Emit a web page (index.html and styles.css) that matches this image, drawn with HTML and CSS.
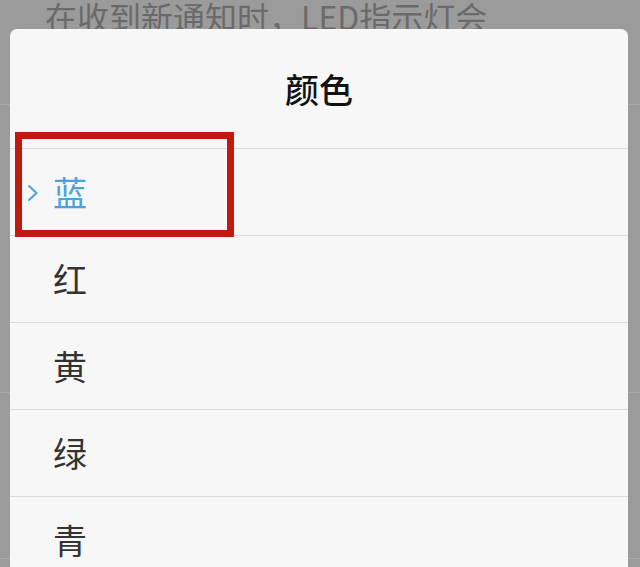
FILE: index.html
```html
<!DOCTYPE html>
<html lang="zh-CN">
<head>
<meta charset="utf-8">
<link rel="stylesheet" href="styles.css">
</head>
<body>
<div class="page">
  <div class="bg-desc">在收到新通知时，LED指示灯会</div>
  <div class="bg-row bg-row1"></div>
  <div class="bg-row bg-row2"></div>
  <div class="bg-row bg-row3"></div>
</div>

<div class="dialog">
  <div class="dialog-title">颜色</div>
  <ul class="options">
    <li class="option selected">
      <svg class="chev" width="12" height="18" viewBox="0 0 12 18"><polyline points="2,2 9.5,9 2,16" fill="none" stroke="#4aa3df" stroke-width="2" stroke-linecap="round" stroke-linejoin="round"/></svg>
      <span>蓝</span>
    </li>
    <li class="option"><span>红</span></li>
    <li class="option"><span>黄</span></li>
    <li class="option"><span>绿</span></li>
    <li class="option"><span>青</span></li>
  </ul>
  <div class="highlight"></div>
</div>
</body>
</html>
```

FILE: styles.css
```css
html, body {
  margin: 0;
  padding: 0;
}
body {
  width: 640px;
  height: 567px;
  overflow: hidden;
  background: #9b9b9b;
  font-family: "Noto Sans CJK SC", "Noto Sans", sans-serif;
  position: relative;
}
.page {
  display: flex;
  flex-direction: column;
}
.bg-desc {
  padding-left: 45px;
  font-size: 32px;
  line-height: 32px;
  height: 32px;
  color: #6a6a6a;
  white-space: nowrap;
}
.bg-row {
  border-bottom: 1px solid #a9a9a9;
}
.bg-row1 { height: 72px; }
.bg-row2 { height: 287px; }
.bg-row3 { height: 165px; }

.dialog {
  position: absolute;
  left: 10px;
  top: 29px;
  width: 618px;
  height: 538px;
  overflow: hidden;
  background: #f7f7f7;
  border-radius: 7px 7px 0 0;
}
.dialog-title {
  height: 119px;
  display: flex;
  align-items: center;
  justify-content: center;
  font-size: 34px;
  font-weight: 500;
  color: #111;
  border-bottom: 1px solid #dcdcdc;
}
.options {
  list-style: none;
  margin: 0;
  padding: 0;
}
.option {
  height: 86px;
  border-bottom: 1px solid #dcdcdc;
  display: flex;
  align-items: center;
  padding-left: 43px;
  position: relative;
  font-size: 34px;
  color: #333;
}
.option span {
  line-height: 1;
}
.option.selected {
  color: #4aa3df;
}
.chev {
  position: absolute;
  left: 17px;
  top: 35px;
}
.highlight {
  position: absolute;
  left: 5px;
  top: 103px;
  width: 205px;
  height: 91px;
  border: 7px solid #c0190e;
}
```
